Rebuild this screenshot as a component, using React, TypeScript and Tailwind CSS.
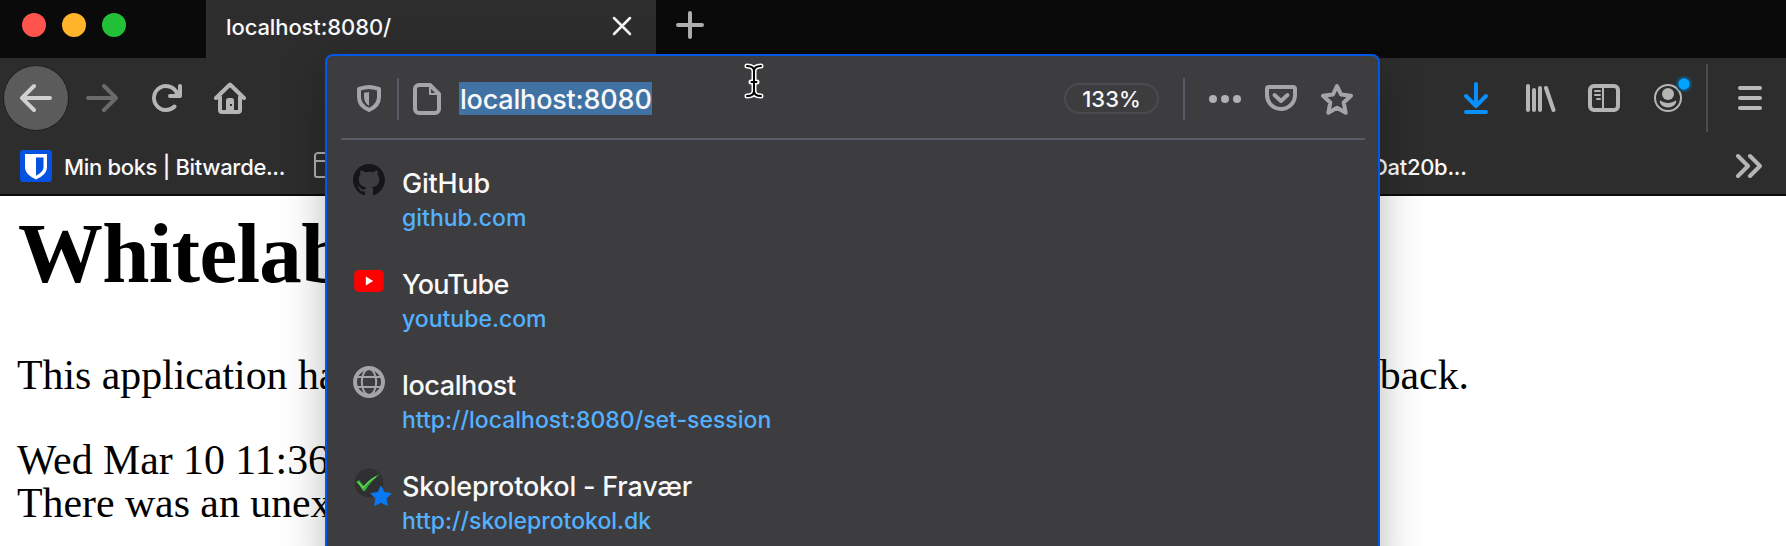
import type { ReactNode } from "react";

type Suggestion = { title: string; url: string; icon: ReactNode; titleClass: string };

function GitHubIcon() {
  return (
    <svg className="h-8 w-8" viewBox="0 0 16 16" fill="#161618">
      <path d="M8 0C3.58 0 0 3.58 0 8c0 3.54 2.29 6.53 5.47 7.59.4.07.55-.17.55-.38 0-.19-.01-.82-.01-1.49-2.01.37-2.53-.49-2.69-.94-.09-.23-.48-.94-.82-1.13-.28-.15-.68-.52-.01-.53.63-.01 1.08.58 1.23.82.72 1.21 1.87.87 2.33.66.07-.52.28-.87.51-1.07-1.78-.2-3.64-.89-3.64-3.95 0-.87.31-1.59.82-2.15-.08-.2-.36-1.02.08-2.12 0 0 .67-.21 2.2.82.64-.18 1.32-.27 2-.27s1.36.09 2 .27c1.53-1.04 2.2-.82 2.2-.82.44 1.1.16 1.92.08 2.12.51.56.82 1.27.82 2.15 0 3.07-1.87 3.75-3.65 3.95.29.25.54.73.54 1.48 0 1.07-.01 1.93-.01 2.2 0 .21.15.46.55.38A8.01 8.01 0 0 0 16 8c0-4.42-3.58-8-8-8z" />
    </svg>
  );
}

function YouTubeIcon() {
  return (
    <svg className="h-8 w-8" viewBox="0 0 32 32">
      <rect x="1.2" y="5" width="29.6" height="22" rx="4.5" fill="#ff0000" />
      <path d="M12.8 11.4v9.2l7.4-4.6z" fill="#fff" />
    </svg>
  );
}

function GlobeIcon() {
  return (
    <svg className="h-8 w-8" viewBox="0 0 32 32" fill="none" stroke="#a5a5a7">
      <circle cx="16" cy="16" r="14" strokeWidth="4" />
      <ellipse cx="16" cy="16" rx="7.2" ry="13" strokeWidth="2" />
      <path d="M3 11h26M3 21h26" strokeWidth="2" />
    </svg>
  );
}

function CheckStarIcon() {
  return (
    <svg className="h-10 w-10 overflow-visible" viewBox="0 0 40 40">
      <circle cx="16" cy="16" r="14.5" fill="#303032" />
      <path d="M3 15l3-2 5 6c5-6 10-10 16-12-6 5-11 10-15 17h-2c-2-4-4-7-7-9z" fill="#2fae35" />
      <path d="M5 15l5 6c4-5 8-9 13-11" stroke="#6fd65f" strokeWidth="1.2" fill="none" />
      <path
        d="M28 19.200l3.100 6.300 7 1-5 5 1.200 7-6.300-3.200-6.300 3.200 1.200-7-5-5 7-1z"
        fill="#0a78f5"
        stroke="#0a78f5"
        strokeWidth="1"
        strokeLinejoin="round"
      />
    </svg>
  );
}

const suggestions: Suggestion[] = [
  { title: "GitHub", url: "github.com", icon: <GitHubIcon />, titleClass: "tracking-[-0.2px]" },
  { title: "YouTube", url: "youtube.com", icon: <YouTubeIcon />, titleClass: "tracking-[-0.8px]" },
  { title: "localhost", url: "http://localhost:8080/set-session", icon: <GlobeIcon />, titleClass: "tracking-[-0.4px]" },
  { title: "Skoleprotokol - Fravær", url: "http://skoleprotokol.dk", icon: <CheckStarIcon />, titleClass: "tracking-[-0.2px]" },
];

function TabStrip() {
  return (
    <div className="flex h-[58px] bg-[#0a0a0a]">
      <div className="flex w-[206px] gap-4 pt-[13px] pl-[22px]">
        <span className="h-6 w-6 rounded-full bg-[#ff544d]" />
        <span className="h-6 w-6 rounded-full bg-[#ffb429]" />
        <span className="h-6 w-6 rounded-full bg-[#23c138]" />
      </div>
      <div className="flex w-[450px] items-start justify-between border-l-2 border-[#303030] bg-[#2d2d2d] pr-[24px] pl-[18px]">
        <span className="pt-[11px] text-[22px] leading-8 font-medium tracking-[-0.1px] text-[#f9f9fa]">localhost:8080/</span>
        <svg className="mt-[16px] h-5 w-5" viewBox="0 0 20 20" stroke="#f4f4f4" strokeWidth="2.5" strokeLinecap="round">
          <path d="M2 2l16 16M18 2L2 18" />
        </svg>
      </div>
      <svg className="mt-[11px] ml-5 h-7 w-7" viewBox="0 0 28 28" stroke="#afafaf" strokeWidth="4" strokeLinecap="round">
        <path d="M14 2v24M2 14h24" />
      </svg>
    </div>
  );
}

function NavBar() {
  return (
    <div className="flex h-20 items-center bg-[#2d2d2d]">
      <div className="ml-[3px] flex h-[68px] w-[66px] items-center justify-center">
        <div className="flex h-[66px] w-[66px] shrink-0 items-center justify-center rounded-full border border-[#1e1e1e] bg-[#5b5b5b]">
          <svg className="h-8 w-8" viewBox="0 0 16 16" fill="#d0d0d0">
            <path d="M15 7H3.414l4.293-4.293a1 1 0 0 0-1.414-1.414l-6 6a1 1 0 0 0 0 1.414l6 6a1 1 0 0 0 1.414-1.414L3.414 9H15a1 1 0 0 0 0-2z" />
          </svg>
        </div>
      </div>
      <svg className="ml-[17px] h-8 w-8" viewBox="0 0 16 16" fill="#6a6a6a">
        <path d="M15.707 7.293l-6-6a1 1 0 0 0-1.414 1.414L12.586 7H1a1 1 0 0 0 0 2h11.586l-4.293 4.293a1 1 0 1 0 1.414 1.414l6-6a1 1 0 0 0 0-1.414z" />
      </svg>
      <svg className="ml-8 h-8 w-8" viewBox="0 0 16 16" fill="#b5b5b5">
        <path d="M15 1a1 1 0 0 0-1 1v2.418A6.995 6.995 0 1 0 8 15a6.954 6.954 0 0 0 4.950-2.050 1 1 0 0 0-1.414-1.414A5.019 5.019 0 1 1 12.549 6H10a1 1 0 0 0 0 2h5a1 1 0 0 0 1-1V2a1 1 0 0 0-1-1z" />
      </svg>
      <svg className="ml-8 h-8 w-8" viewBox="0 0 32 32" fill="none" stroke="#b5b5b5" strokeWidth="4" strokeLinecap="round" strokeLinejoin="round">
        <path d="M2 16L16 2.500l14 13.500" />
        <path d="M6 15v13a2 2 0 0 0 2 2h16a2 2 0 0 0 2-2V15" />
        <path d="M12 30V18.500a2.500 2.500 0 0 1 2.500-2.500h3a2.500 2.500 0 0 1 2.500 2.500V30z" fill="#b5b5b5" stroke="none" />
        <rect x="16" y="22" width="2" height="2" fill="#2d2d2d" stroke="none" />
      </svg>
      <div className="flex-1" />
      <svg className="h-8 w-8" viewBox="0 0 32 32" fill="none" stroke="#0a8fff" strokeWidth="4" strokeLinecap="round" strokeLinejoin="round">
        <path d="M16 2v21M6 14l10 10 10-10M6 30h20" />
      </svg>
      <svg className="ml-8 h-8 w-8" viewBox="0 0 32 32" stroke="#b5b5b5" strokeWidth="4" strokeLinecap="round">
        <path d="M4 4v24M10 8v20M16 6v22M22 6l7.500 22" />
      </svg>
      <svg className="ml-8 h-8 w-8" viewBox="0 0 32 32" fill="none" stroke="#b5b5b5">
        <rect x="2" y="4" width="28" height="24" rx="4" strokeWidth="4" />
        <path d="M15 5v22M7 9h5M7 13h5M9 17h3" strokeWidth="2" strokeLinecap="round" />
      </svg>
      <svg className="ml-8 h-8 w-8 overflow-visible" viewBox="0 0 32 32">
        <circle cx="16" cy="16" r="13" fill="none" stroke="#b5b5b5" strokeWidth="2" />
        <circle cx="16" cy="12" r="6" fill="#b5b5b5" />
        <path d="M8 18.200c5 3.700 11 3.700 16 0 1 3-2.500 7.300-8 7.300s-9-4.300-8-7.300z" fill="#b5b5b5" />
        <circle cx="32" cy="2" r="8" fill="#174c68" />
        <circle cx="32" cy="2" r="5.700" fill="#00a3ff" />
      </svg>
      <div className="mt-[6px] ml-[22px] h-[68px] w-0.5 self-start bg-[#4d4d4d]" />
      <svg className="mr-5 ml-[26px] h-8 w-8" viewBox="0 0 32 32" stroke="#b9b9b9" strokeWidth="4" strokeLinecap="round">
        <path d="M6 6h20M6 16h20M6 26h20" />
      </svg>
    </div>
  );
}

function BookmarksBar() {
  return (
    <div className="flex h-[58px] items-start border-b-2 border-[#0b0b0b] bg-[#2d2d2d] text-[22px] leading-8 font-medium text-[#f9f9fa]">
      <svg className="mt-3 ml-5 h-8 w-8" viewBox="0 0 32 32">
        <rect width="32" height="32" rx="3" fill="#0552e0" />
        <path d="M5 4h22v13c0 6-5 9.500-11 12.500C10 26.500 5 23 5 17z" fill="#fff" />
        <path d="M16 7.500h7.500V17c0 4-3.500 6.500-7.500 8.700z" fill="#0552e0" />
      </svg>
      <span className="mt-[13px] ml-[12px] w-[231px] tracking-[-0.33px] whitespace-nowrap">Min boks | Bitwarde...</span>
      <svg className="mt-3 ml-[18px] h-8 w-8" viewBox="0 0 32 32" fill="none" stroke="#b0b0b0" strokeWidth="2">
        <path d="M2 25V5a3 3 0 0 1 3-2h8l3 4h12a2 2 0 0 1 2 2v16a2 2 0 0 1-2 2H4a2 2 0 0 1-2-2zM2 11h28" />
      </svg>
      <div className="flex-1" />
      <span className="mt-[13px] w-[92px] tracking-[-0.3px] whitespace-nowrap">Dat20b...</span>
      <svg className="mt-[14px] mr-6 ml-[270px] h-7 w-7" viewBox="0 0 28 28" fill="none" stroke="#b5b5b5" strokeWidth="4" strokeLinecap="round" strokeLinejoin="round">
        <path d="M4 4l10 10L4 24M16 4l10 10-10 10" />
      </svg>
    </div>
  );
}

function ErrorPage() {
  return (
    <main className="h-[350px] overflow-hidden bg-white pl-[17px] font-['Liberation_Serif',serif] text-black">
      <h1 className="h-[136px] pt-[8px] pl-px text-[85px] leading-[98px] font-bold tracking-[-0.7px] whitespace-nowrap">Whitelab</h1>
      <p className="flex h-[85px] justify-between pt-[22px] pr-[317px] text-[41.800px] leading-[43px] whitespace-nowrap">
        <span>This application ha</span>
        <span>back.</span>
      </p>
      <div className="pt-[22px] text-[41.800px] leading-[43px] whitespace-nowrap">
        <div>Wed Mar 10 11:36</div>
        <div>There was an unex</div>
      </div>
    </main>
  );
}

function AddressPanel() {
  return (
    <div className="absolute top-[54px] left-[325px] flex h-[520px] w-[1055px] flex-col rounded-t-lg border-2 border-[#0058e6] bg-[#3d3d3f] pr-[13px] pl-[14px] shadow-[0_12px_44px_rgba(0,0,0,0.28)]">
      <div className="flex h-[84px] shrink-0 items-center border-b-2 border-[#555c67] pt-[3px] pr-3 pl-3">
        <svg className="h-8 w-8" viewBox="0 0 32 32" fill="none" stroke="#a5a5a7" strokeLinejoin="round">
          <path d="M16 4c3 0 6 .8 10 2v8c0 6-3 10-10 13C9 24 6 20 6 14V6c4-1.200 7-2 10-2z" strokeWidth="4" />
          <path d="M16 9v14c-3-2-5-5-5-9v-4.200z" fill="#a5a5a7" stroke="none" />
        </svg>
        <div className="ml-3 h-[42px] w-0.5 bg-[#555c67]" />
        <svg className="ml-3 h-8 w-8" viewBox="0 0 32 32" fill="none" stroke="#a5a5a7" strokeLinejoin="round">
          <path d="M8 2h11l9 9v15a4 4 0 0 1-4 4H8a4 4 0 0 1-4-4V6a4 4 0 0 1 4-4z" strokeWidth="4" />
          <path d="M19 3v8h8" strokeWidth="2" />
        </svg>
        <div className="ml-4 h-[33px] w-[193px] bg-[#4172a4] pl-px text-[27px] leading-[35px] font-medium tracking-[-0.2px] whitespace-nowrap text-[#f9f9fa]">localhost:8080</div>
        <div className="flex-1" />
        <div className="h-[31px] w-[95px] rounded-full border-2 border-[#4b4b4d] text-center text-[22px] leading-[28px] font-medium text-[#f9f9fa]">133%</div>
        <div className="ml-6 h-[42px] w-0.5 bg-[#555c67]" />
        <svg className="ml-6 h-8 w-8" viewBox="0 0 32 32" fill="#b0b0b2">
          <circle cx="4" cy="16" r="4" />
          <circle cx="16" cy="16" r="4" />
          <circle cx="28" cy="16" r="4" />
        </svg>
        <svg className="ml-6 h-8 w-8" viewBox="0 0 32 32" fill="none" stroke="#a5a5a7" strokeWidth="4" strokeLinecap="round" strokeLinejoin="round">
          <path d="M4 4h24a2 2 0 0 1 2 2v6a14 14 0 0 1-28 0V6a2 2 0 0 1 2-2z" />
          <path d="M9.500 12l6.500 6 6.500-6" />
        </svg>
        <svg className="ml-6 h-8 w-8" viewBox="0 0 32 32" fill="none" stroke="#a5a5a7" strokeWidth="4" strokeLinejoin="round">
          <path d="M16 3l4 8.500 10 1.300-7.300 6.700 2 10.300L16 24.800l-8.700 5 2-10.300L2 12.800l10-1.300z" />
        </svg>
      </div>
      <ul className="pl-3">
        {suggestions.map((s) => (
          <li key={s.title} className="flex h-[101px] gap-[17px] pt-6">
            <div className="h-8 w-8 shrink-0">{s.icon}</div>
            <div className="pt-0.5 font-medium whitespace-nowrap">
              <div className={`text-[27px] leading-[36px] text-[#f9f9fa] ${s.titleClass}`}>{s.title}</div>
              <div className="text-[23px] leading-[32px] text-[#53b1ff]">{s.url}</div>
            </div>
          </li>
        ))}
      </ul>
    </div>
  );
}

function TextCursor() {
  return (
    <svg className="absolute top-[62px] left-[744px] h-[38px] w-5" viewBox="0 0 20 38" fill="none" strokeLinecap="round">
      <path d="M3 4c4 0 7 1.500 7 5 0-3.500 3-5 7-5M3 34c4 0 7-1.500 7-5 0 3.500 3 5 7 5M10 8v22M7 20h6" stroke="#fff" strokeWidth="5" />
      <path d="M3 4c4 0 7 1.500 7 5 0-3.500 3-5 7-5M3 34c4 0 7-1.500 7-5 0 3.500 3 5 7 5M10 8v22M7.500 20h5" stroke="#000" strokeWidth="2" />
    </svg>
  );
}

export default function App() {
  return (
    <div className="relative h-[546px] w-[1786px] overflow-hidden bg-white font-['Inter',sans-serif]">
      <TabStrip />
      <NavBar />
      <BookmarksBar />
      <ErrorPage />
      <AddressPanel />
      <TextCursor />
    </div>
  );
}
